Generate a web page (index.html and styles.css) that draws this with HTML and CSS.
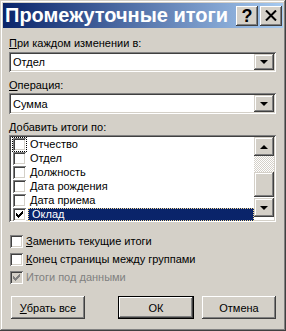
FILE: index.html
```html
<!DOCTYPE html>
<html lang="ru">

<head>
    <meta charset="UTF-8">
    <meta name="viewport" content="width=device-width, initial-scale=1.0">
    <title>Промежуточные итоги</title>
    <link rel="stylesheet" href="styles.css">
</head>

<body>
    <div class="window">
        <div class="titlebar">
            <span class="title">Промежуточные итоги</span>
            <span class="tbtn help">?</span>
            <span class="tbtn close">
                <svg width="12" height="11" viewBox="0 0 12 11">
                    <path d="M1 0.5 L11 10.5 M11 0.5 L1 10.5" stroke="#000" stroke-width="2" />
                </svg>
            </span>
        </div>

        <div class="content">
            <div class="field-label label-first"><u>П</u>ри каждом изменении в:</div>
            <div class="combo">
                <span class="combo-value">Отдел</span>
                <span class="drop-btn"><span class="arrow-down"></span></span>
            </div>

            <div class="field-label"><u>О</u>перация:</div>
            <div class="combo combo-second">
                <span class="combo-value">Сумма</span>
                <span class="drop-btn"><span class="arrow-down"></span></span>
            </div>

            <div class="field-label"><u>Д</u>обавить итоги по:</div>
            <div class="listbox">
                <ul class="items">
                    <li class="item"><span class="check focus"></span>Отчество</li>
                    <li class="item"><span class="check"></span>Отдел</li>
                    <li class="item"><span class="check"></span>Должность</li>
                    <li class="item"><span class="check"></span>Дата рождения</li>
                    <li class="item"><span class="check"></span>Дата приема</li>
                    <li class="item"><span class="check checked"><svg width="7" height="7" viewBox="0 0 7 7"><path d="M0 2h1v1h1v1h1v-1h1v-1h1v-1h1v-1h1v3h-1v1h-1v1h-1v1h-1v1h-1v-1h-1v-1h-1z" fill="#000" /></svg></span><span class="item-text selected">Оклад</span></li>
                </ul>
                <div class="scrollbar">
                    <span class="sb-btn"><span class="arrow-up"></span></span>
                    <span class="sb-track"></span>
                    <span class="sb-thumb"></span>
                    <span class="sb-btn"><span class="arrow-down"></span></span>
                </div>
            </div>

            <div class="options">
                <div class="option"><span class="check"></span><u>З</u>аменить текущие итоги</div>
                <div class="option"><span class="check"></span><u>К</u>онец страницы между группами</div>
                <div class="option disabled"><span class="check checked"><svg width="7" height="7" viewBox="0 0 7 7"><path d="M0 2h1v1h1v1h1v-1h1v-1h1v-1h1v-1h1v3h-1v1h-1v1h-1v1h-1v1h-1v-1h-1v-1h-1z" fill="#808080" /></svg></span>Итоги под данными</div>
            </div>

            <div class="buttons">
                <span class="btn"><u>У</u>брать все</span>
                <span class="btn btn-default">ОК</span>
                <span class="btn">Отмена</span>
            </div>
        </div>
    </div>
</body>

</html>
```

FILE: styles.css
```css
body {
    margin: 0;
    background: #d4d0c8;
    font-family: "Liberation Sans", Arial, sans-serif;
    font-size: 11px;
    color: #000;
}

u {
    text-decoration: underline;
    text-underline-offset: 1px;
}

.window {
    width: 286px;
    height: 331px;
    box-sizing: border-box;
    padding: 3px;
    background: #d4d0c8;
    box-shadow: inset -1px -1px #404040, inset 1px 1px #d4d0c8,
        inset -2px -2px #808080, inset 2px 2px #fff;
}

/* title bar */
.titlebar {
    height: 25px;
    display: flex;
    align-items: center;
    padding: 0 1px 0 2px;
    background: linear-gradient(to right, #0a246a, #a6caf0);
}

.title {
    flex: 1;
    color: #fff;
    font-weight: bold;
    font-size: 20px;
    white-space: nowrap;
    overflow: hidden;
}

.tbtn {
    width: 22px;
    height: 20px;
    margin-left: 2px;
    display: flex;
    align-items: center;
    justify-content: center;
    box-sizing: border-box;
    background: #d4d0c8;
    box-shadow: inset -1px -1px #404040, inset 1px 1px #fff,
        inset -2px -2px #808080;
}

.help {
    font-weight: bold;
    font-size: 18px;
    line-height: 20px;
}

/* fields */
.content {
    padding: 0 7px 0 6px;
}

.field-label {
    height: 13px;
    line-height: 13px;
    margin-top: 7px;
}

.label-first {
    margin-top: 9px;
}

.combo {
    height: 20px;
    margin-top: 2px;
    display: flex;
    align-items: center;
    box-sizing: border-box;
    padding: 2px;
    background: #fff;
    box-shadow: inset 1px 1px #808080, inset -1px -1px #fff,
        inset 2px 2px #404040, inset -2px -2px #d4d0c8;
}

.combo-second {
    height: 21px;
    margin-top: 1px;
}

.combo-value {
    flex: 1;
    padding-left: 2px;
}

.drop-btn {
    width: 20px;
    height: 100%;
    display: flex;
    align-items: center;
    justify-content: center;
    box-sizing: border-box;
    background: #d4d0c8;
    box-shadow: inset -1px -1px #404040, inset 1px 1px #d4d0c8,
        inset -2px -2px #808080, inset 2px 2px #fff;
}

.arrow-down,
.arrow-up {
    width: 0;
    height: 0;
    border-left: 4px solid transparent;
    border-right: 4px solid transparent;
}

.arrow-down {
    border-top: 4px solid #000;
}

.arrow-up {
    border-bottom: 4px solid #000;
}

/* list */
.listbox {
    height: 87px;
    margin-top: 1px;
    display: flex;
    box-sizing: border-box;
    padding: 2px;
    background: #fff;
    box-shadow: inset 1px 1px #808080, inset -1px -1px #fff,
        inset 2px 2px #404040, inset -2px -2px #d4d0c8;
}

.items {
    flex: 1;
    margin: 0;
    padding: 0;
    list-style: none;
}

.item {
    height: 14px;
    display: flex;
    align-items: center;
    padding-left: 2px;
}

.item .check {
    margin-right: 4px;
}

.item-text.selected {
    flex: 1;
    height: 13px;
    line-height: 13px;
    padding-left: 4px;
    margin-left: -2px;
    color: #fff;
    background: #0a246a;
    outline: 1px dotted #f5db95;
    outline-offset: -1px;
}

.check {
    width: 13px;
    height: 13px;
    flex: none;
    display: flex;
    align-items: center;
    justify-content: center;
    box-sizing: border-box;
    background: #fff;
    box-shadow: inset 1px 1px #808080, inset -1px -1px #fff,
        inset 2px 2px #404040, inset -2px -2px #d4d0c8;
}

.check.focus {
    outline: 1px dotted #000;
}

.scrollbar {
    width: 20px;
    display: flex;
    flex-direction: column;
}

.sb-btn,
.sb-thumb {
    display: flex;
    align-items: center;
    justify-content: center;
    background: #d4d0c8;
    box-shadow: inset -1px -1px #404040, inset 1px 1px #d4d0c8,
        inset -2px -2px #808080, inset 2px 2px #fff;
}

.sb-btn {
    height: 19px;
}

.sb-track {
    height: 16px;
    background-image: conic-gradient(#fff 25%, #d4d0c8 0 50%, #fff 0 75%, #d4d0c8 0);
    background-size: 2px 2px;
}

.sb-thumb {
    height: 25px;
    margin-bottom: 1px;
}

/* options */
.options {
    margin-top: 13px;
    padding-left: 1px;
}

.option {
    height: 13px;
    line-height: 13px;
    display: flex;
    align-items: center;
    margin-bottom: 5px;
}

.option .check {
    margin-right: 3px;
}

.option.disabled {
    color: #808080;
}

.option.disabled .check {
    background: #d4d0c8;
}

/* buttons */
.buttons {
    display: flex;
    margin-top: 12px;
    padding-left: 2px;
}

.btn {
    width: 75px;
    height: 23px;
    display: flex;
    align-items: center;
    justify-content: center;
    box-sizing: border-box;
    background: #d4d0c8;
    box-shadow: inset -1px -1px #404040, inset 1px 1px #fff,
        inset -2px -2px #808080;
}

.btn-default {
    width: 77px;
    margin-left: 33px;
    border: 1px solid #000;
    margin-right: 8px;
}
```
